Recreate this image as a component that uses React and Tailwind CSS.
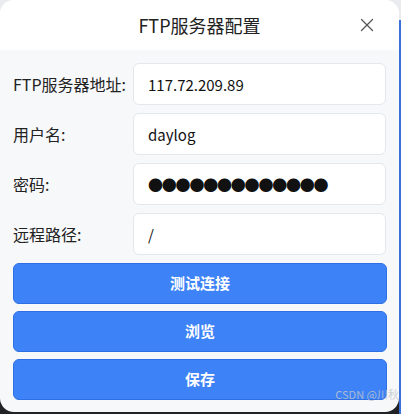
import React, { useState } from 'react'
import { X } from 'lucide-react'

const fields = [
  { label: 'FTP服务器地址:', value: '117.72.209.89' },
  { label: '用户名:', value: 'daylog' },
  { label: '密码:', value: '●●●●●●●●●●●●●', secret: true },
  { label: '远程路径:', value: '/' },
]

export default function App() {
  const [values, setValues] = useState(fields.map((f) => f.value))

  return (
    <div
      className="relative w-[401px] h-[414px] overflow-hidden bg-[linear-gradient(to_bottom,#e9ebee_50%,#202226_50%)]"
      style={{ fontFamily: '"Noto Sans CJK SC", "Noto Sans", sans-serif' }}
    >
      <div className="absolute right-0 top-[20px] bottom-0 w-[2px] bg-[#3b6fd8]" />
      <div className="relative flex flex-col w-[399px] h-[412px] rounded-[14px] overflow-hidden bg-[#f7f8fa]">
        {/* Header */}
        <div className="relative flex items-center justify-center h-[50px] bg-white shrink-0">
          <span className="text-[18px] text-[#222]">FTP服务器配置</span>
          <button className="absolute right-[21px] top-[14px] text-[#555]">
            <X className="w-[22px] h-[22px]" strokeWidth={1.4} />
          </button>
        </div>

        {/* Body */}
        <div className="flex flex-col px-[13px] pt-[13px] gap-[8px]">
          {fields.map((f, i) => (
            <div key={f.label} className="flex items-center h-[42px]">
              <label className="w-[120px] text-[16px] text-[#222] shrink-0">{f.label}</label>
              <input
                className={`ml-auto w-[254px] h-[42px] rounded-[6px] border border-[#e4e7ec] bg-white px-[14px] text-[#111] outline-none ${
                  f.secret ? 'text-[15px] tracking-[-1.2px]' : 'text-[15px]'
                }`}
                value={values[i]}
                onChange={(e) => {
                  const next = [...values]
                  next[i] = e.target.value
                  setValues(next)
                }}
              />
            </div>
          ))}

          <div className="flex flex-col gap-[7px] mr-[-1px]">
            {['测试连接', '浏览', '保存'].map((t) => (
              <button
                key={t}
                className="h-[41px] rounded-[6px] border border-[#2f6fe4] bg-[#3d82f6] text-white text-[15px] font-bold"
              >
                {t}
              </button>
            ))}
          </div>
        </div>
      </div>
      <span className="absolute right-[2px] bottom-[12px] text-[11px] text-[#c4c7cc] opacity-80">
        CSDN @川秋
      </span>
    </div>
  )
}
